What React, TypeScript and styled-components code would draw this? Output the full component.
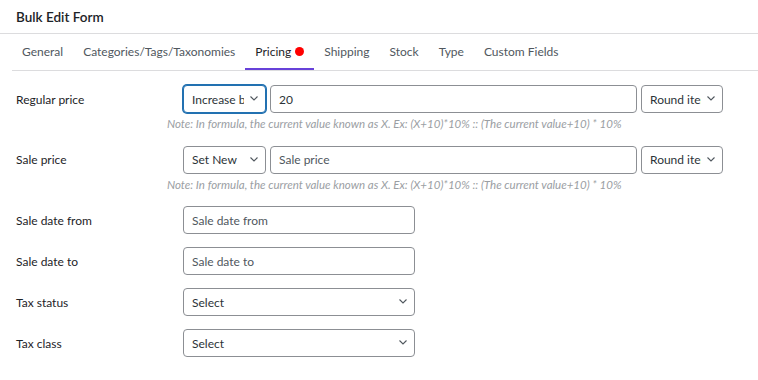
import * as React from 'react';
import styled, { createGlobalStyle, css } from 'styled-components';

const GlobalStyle = createGlobalStyle`
    body {
        margin: 0;
        background: #ffffff;
        font-family: Lato, "Open Sans", sans-serif;
        color: #1d2327;
    }
`;

const Colors = {
    Text: '#1d2327',
    Muted: '#50575e',
    Border: '#8c8f94',
    Line: '#dcdcde',
    Accent: '#6741d9',
    Focus: '#2271b1',
    Note: '#9a9ea3',
};

const Page = styled.div`
    width: 758px;
    height: 380px;
    overflow: hidden;
    background: #ffffff;
`;

const Header = styled.div`
    height: 33px;
    display: flex;
    align-items: center;
    padding: 0 16px;
    border-bottom: 1px solid ${Colors.Line};
`;

const Title = styled.h2`
    margin: 0;
    font-size: 13.5px;
    font-weight: 600;
    color: ${Colors.Text};
`;

const Tabs = styled.div`
    display: flex;
    margin-left: 12px;
    border-bottom: 1px solid ${Colors.Line};
`;

interface TabProps {
    $active?: boolean;
}

const Tab = styled.div<TabProps>`
    display: flex;
    align-items: center;
    gap: 4px;
    height: 36px;
    padding: 1px 10px 0;
    box-sizing: border-box;
    border-bottom: 2px solid ${(p) => (p.$active ? Colors.Accent : 'transparent')};
    font-size: 12px;
    color: ${(p) => (p.$active ? Colors.Text : Colors.Muted)};
    white-space: nowrap;
`;

const Dot = styled.span`
    width: 9px;
    height: 9px;
    border-radius: 50%;
    background: #ff0000;
`;

const Form = styled.div`
    padding-top: 14px;
`;

const Row = styled.div`
    display: grid;
    grid-template-columns: 167px 1fr;
    margin-bottom: 13px;
`;

const Label = styled.label`
    padding-left: 16px;
    height: 28px;
    display: flex;
    align-items: center;
    font-size: 12px;
    color: ${Colors.Text};
`;

const Field = styled.div`
    display: flex;
    flex-direction: column;
`;

const Controls = styled.div`
    display: flex;
    gap: 4px;
    padding-left: 16px;
    width: 540px;
`;

const Note = styled.p`
    margin: 3px 0 1.5px;
    font-size: 11.5px;
    line-height: 15px;
    font-style: italic;
    color: ${Colors.Note};
    white-space: nowrap;
`;

const controlBase = css`
    height: 28px;
    box-sizing: border-box;
    border: 1px solid ${Colors.Border};
    border-radius: 4px;
    background: #ffffff;
    font-family: inherit;
    font-size: 12px;
    color: #2c3338;
    outline: none;
`;

const TextInput = styled.input<{ $width?: number }>`
    ${controlBase};
    padding: 0 8px;
    width: ${(p) => (p.$width ? `${p.$width}px` : 'auto')};
    flex: ${(p) => (p.$width ? 'none' : 1)};
    min-width: 0;

    &::placeholder {
        color: #50575e;
    }
`;

const SelectWrap = styled.div<{ $width: number }>`
    position: relative;
    width: ${(p) => p.$width}px;
    flex: none;
`;

const Select = styled.select<{ $focused?: boolean }>`
    ${controlBase};
    appearance: none;
    width: 100%;
    padding: 0 21px 0 8px;
    ${(p) =>
        p.$focused &&
        css`
            border-color: ${Colors.Focus};
            box-shadow: 0 0 0 1px ${Colors.Focus};
        `}
`;

const Chevron = styled.svg`
    position: absolute;
    right: 8px;
    top: 11px;
    width: 8px;
    height: 5px;
    pointer-events: none;
`;

const Arrow = () => (
    <Chevron viewBox="0 0 8 5">
        <path d="M0.5 0.5 L4 4 L7.5 0.5" fill="none" stroke="#50575e" strokeWidth="1.1" />
    </Chevron>
);

interface DropdownProps {
    width: number;
    value: string;
    focused?: boolean;
}

const Dropdown = ({ width, value, focused }: DropdownProps) => (
    <SelectWrap $width={width}>
        <Select $focused={focused} defaultValue={value}>
            <option value={value}>{value}</option>
        </Select>
        <Arrow />
    </SelectWrap>
);

const NOTE = 'Note: In formula, the current value known as X. Ex: (X+10)*10% :: (The current value+10) * 10%';

const tabs = ['General', 'Categories/Tags/Taxonomies', 'Pricing', 'Shipping', 'Stock', 'Type', 'Custom Fields'];

export default function App() {
    return (
        <Page>
            <GlobalStyle />
            <Header>
                <Title>Bulk Edit Form</Title>
            </Header>
            <Tabs>
                {tabs.map((t) => (
                    <Tab key={t} $active={t === 'Pricing'}>
                        {t}
                        {t === 'Pricing' && <Dot />}
                    </Tab>
                ))}
            </Tabs>
            <Form>
                <Row>
                    <Label>Regular price</Label>
                    <Field>
                        <Controls>
                            <Dropdown width={83} value="Increase by" focused />
                            <TextInput defaultValue="20" />
                            <Dropdown width={82} value="Round item" />
                        </Controls>
                        <Note>{NOTE}</Note>
                    </Field>
                </Row>
                <Row>
                    <Label>Sale price</Label>
                    <Field>
                        <Controls>
                            <Dropdown width={83} value="Set New" />
                            <TextInput placeholder="Sale price" />
                            <Dropdown width={82} value="Round item" />
                        </Controls>
                        <Note>{NOTE}</Note>
                    </Field>
                </Row>
                <Row>
                    <Label>Sale date from</Label>
                    <Field>
                        <Controls>
                            <TextInput $width={232} placeholder="Sale date from" />
                        </Controls>
                    </Field>
                </Row>
                <Row>
                    <Label>Sale date to</Label>
                    <Field>
                        <Controls>
                            <TextInput $width={232} placeholder="Sale date to" />
                        </Controls>
                    </Field>
                </Row>
                <Row>
                    <Label>Tax status</Label>
                    <Field>
                        <Controls>
                            <Dropdown width={232} value="Select" />
                        </Controls>
                    </Field>
                </Row>
                <Row>
                    <Label>Tax class</Label>
                    <Field>
                        <Controls>
                            <Dropdown width={232} value="Select" />
                        </Controls>
                    </Field>
                </Row>
            </Form>
        </Page>
    );
}
